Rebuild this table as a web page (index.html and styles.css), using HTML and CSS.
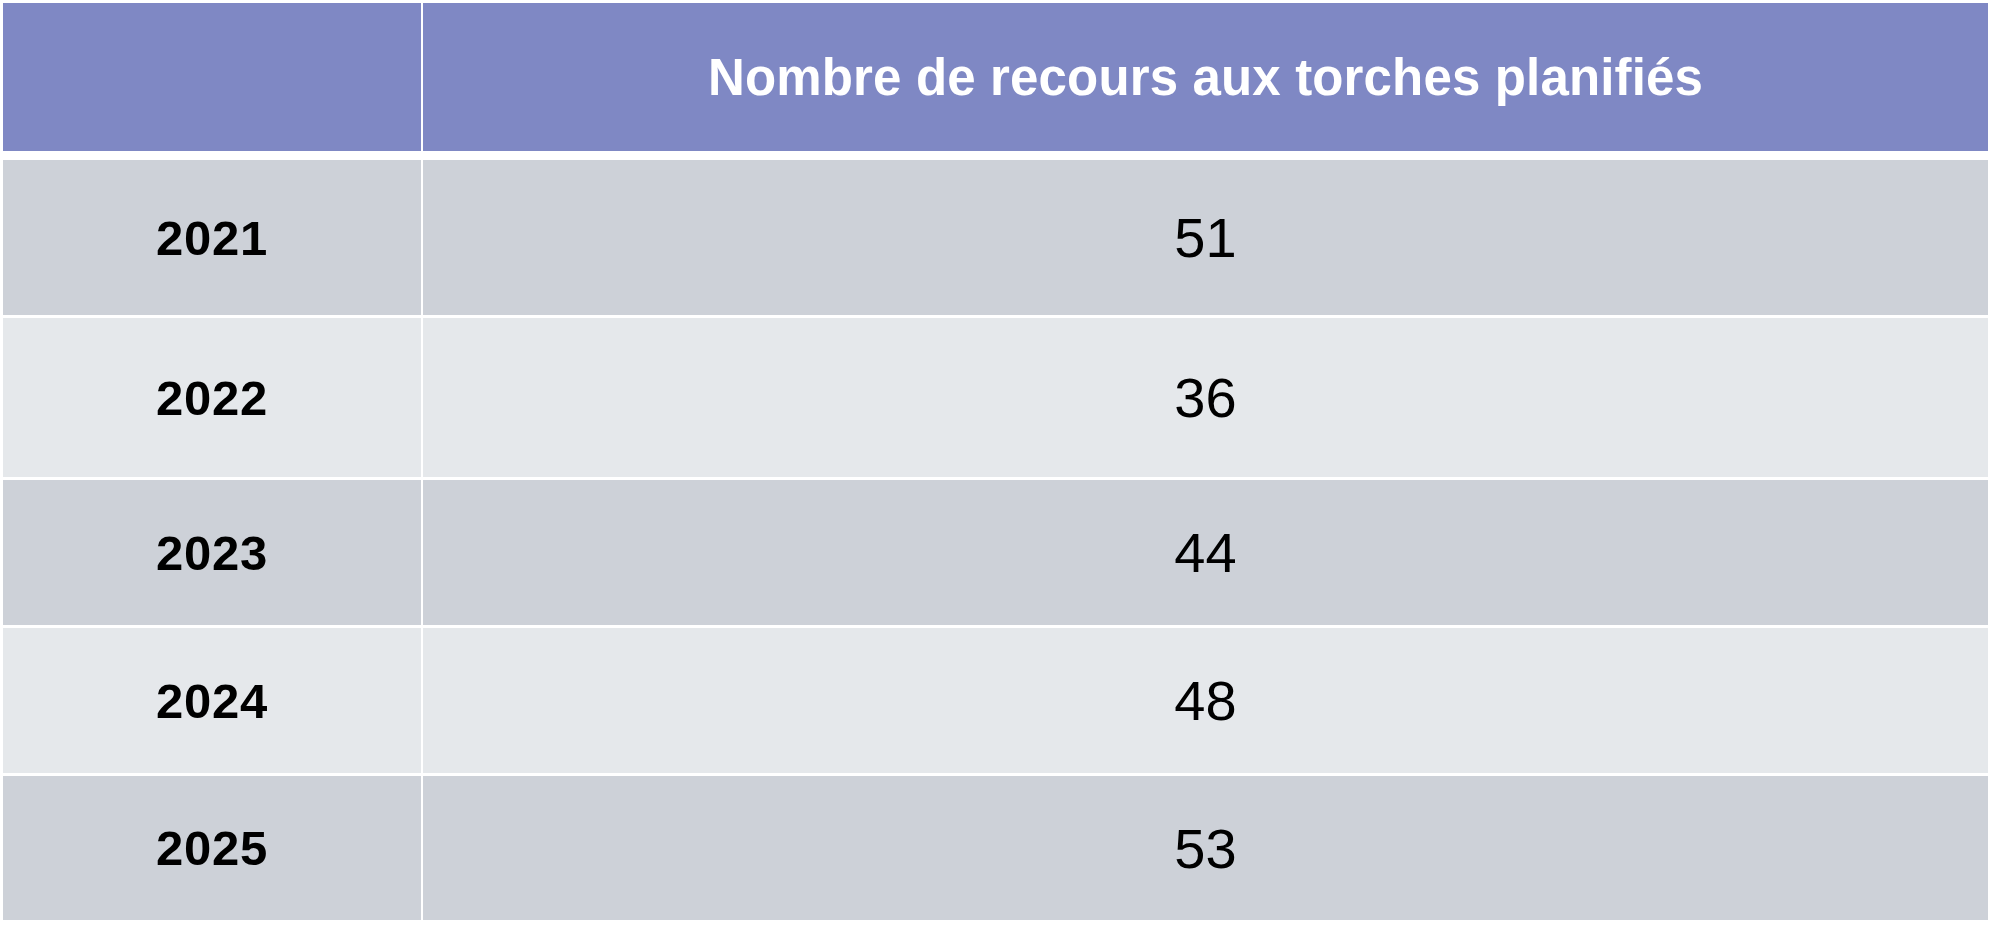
FILE: index.html
```html
<!DOCTYPE html>
<html lang="fr">
<head>
<meta charset="utf-8">
<title>Recours aux torches planifiés</title>
<link rel="stylesheet" href="styles.css">
</head>
<body>
<div class="table">
  <div class="row head">
    <div class="cell"></div>
    <div class="cell">Nombre de recours aux torches planifiés</div>
  </div>
  <div class="body">
    <div class="row dark r1">
      <div class="cell year">2021</div>
      <div class="cell val">51</div>
    </div>
    <div class="row light r2">
      <div class="cell year">2022</div>
      <div class="cell val">36</div>
    </div>
    <div class="row dark r3">
      <div class="cell year">2023</div>
      <div class="cell val">44</div>
    </div>
    <div class="row light r4">
      <div class="cell year">2024</div>
      <div class="cell val">48</div>
    </div>
    <div class="row dark r5">
      <div class="cell year">2025</div>
      <div class="cell val">53</div>
    </div>
  </div>
</div>
</body>
</html>
```
FILE: styles.css
```css
html, body {
  margin: 0;
  padding: 0;
  background: #ffffff;
}

body {
  font-family: "Liberation Sans", Arial, sans-serif;
}

.table {
  margin: 3px 0 0 3px;
  width: 1985px;
  display: flex;
  flex-direction: column;
}

.row {
  display: grid;
  grid-template-columns: 418px 1fr;
  column-gap: 2px;
}

.cell {
  display: flex;
  align-items: center;
  justify-content: center;
}

.head {
  height: 148px;
}

.head .cell {
  background: #7f88c4;
  color: #ffffff;
  font-weight: 700;
  font-size: 51px;
  letter-spacing: 0.15px;
}

.body {
  margin-top: 9px;
  display: flex;
  flex-direction: column;
  gap: 3px;
}

.r1 { height: 155px; }
.r2 { height: 159px; }
.r3 { height: 145px; }
.r4 { height: 145px; }
.r5 { height: 144px; }

.dark .cell {
  background: #cdd1d8;
}

.light .cell {
  background: #e5e8eb;
}

.year {
  font-weight: 700;
  font-size: 49px;
  letter-spacing: 0.8px;
  color: #000000;
}

.val {
  font-size: 56px;
  color: #000000;
}
```
